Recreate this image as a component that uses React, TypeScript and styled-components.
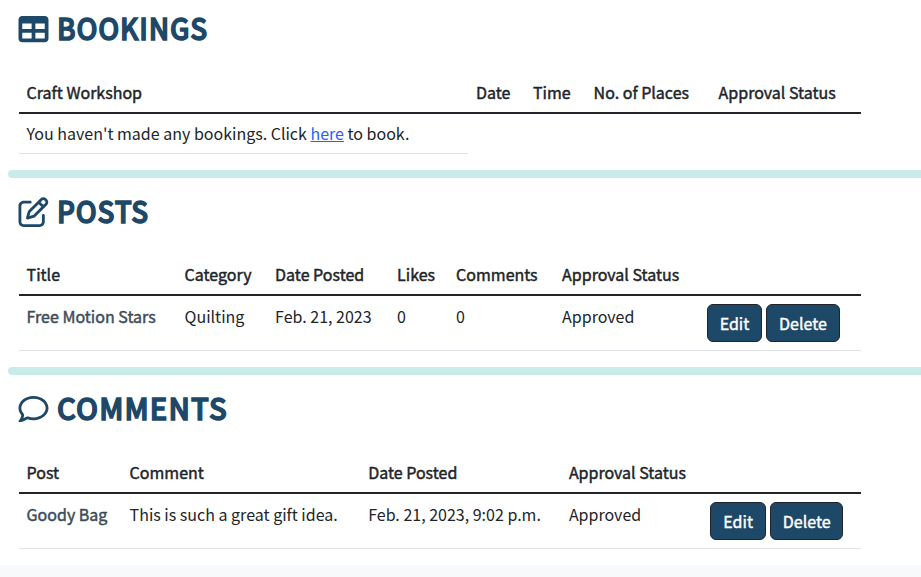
import React from 'react';
import styled, { createGlobalStyle } from 'styled-components';
import { FaTable, FaRegPenToSquare, FaRegComment } from 'react-icons/fa6';

const GlobalStyle = createGlobalStyle`
  *, *::before, *::after { box-sizing: border-box; }
  body {
    margin: 0;
    background: #fff;
    color: #212529;
    font: 400 16px/24px "Noto Sans CJK SC", "Noto Sans", sans-serif;
    overflow: hidden;
  }
`;

const Page = styled.main`
  height: 577px;
  overflow: hidden;
`;

const Section = styled.section`
  padding-left: 18.6px;
`;

const Heading = styled.h2<{ $height: number; $top: number }>`
  display: flex;
  align-items: flex-start;
  gap: 7.7px;
  height: ${p => p.$height}px;
  margin: 0 0 0 -0.6px;
  padding-top: ${p => p.$top}px;
  color: #1e4868;
  font-size: 30px;
  line-height: 36px;
  font-weight: 500;

  svg {
    width: 31px;
    height: 30px;
    margin-top: 5px;
    flex: none;
  }
`;

const HeadingText = styled.span<{ $spacing: number; $scale: number }>`
  letter-spacing: ${p => p.$spacing}px;
  transform: scaleX(${p => p.$scale});
  transform-origin: left center;
  -webkit-text-stroke: 1.5px #1e4868;
`;

const Table = styled.div`
  width: 842.4px;
`;

const Row = styled.div<{ $columns: string; $height: number; $head?: boolean }>`
  display: grid;
  grid-template-columns: ${p => p.$columns};
  height: ${p => p.$height}px;
  border-bottom: ${p => (p.$head ? '2px solid #212529' : '1px solid #dee2e6')};
  -webkit-text-stroke: ${p => (p.$head ? '0.45px currentColor' : '0')};
  ${p => p.$head && 'line-height: 22px;'}
`;

const EmptyRow = styled(Row)`
  width: 449.4px;
  line-height: 22px;
`;

const Cell = styled.div`
  padding: 8px 0 0 8px;
  white-space: nowrap;
`;

const Link = styled.a`
  color: #1f62fd;
  text-decoration: underline;
`;

const PostLink = styled.a`
  color: #3f4c58;
  text-decoration: none;
  -webkit-text-stroke: 0.45px currentColor;
`;

const Actions = styled.div`
  display: flex;
  gap: 4px;
  padding: 8px 0 0 8px;
`;

const Button = styled.button<{ $width: number }>`
  width: ${p => p.$width}px;
  height: 38px;
  padding: 0 0 1px;
  border: 1px solid #212529;
  border-radius: 6px;
  background: #1e4868;
  color: #fff;
  font: inherit;
  -webkit-text-stroke: 0.4px #fff;
`;

const Divider = styled.hr`
  height: 8px;
  margin: 16px 0 0 8px;
  border: 0;
  border-radius: 4px 0 0 4px;
  background: #c9ece9;
`;

const Footer = styled.footer`
  height: 12px;
  margin-top: 16px;
  background: #f8f9fa;
`;

const bookingColumns = '449.4px 57px 60.6px 125px 1fr';
const postColumns = '158px 90.5px 122px 59px 106px 144.9px 1fr';
const commentColumns = '103px 238.6px 200.7px 141.3px 1fr';

const RowActions = ({ deleteWidth, editWidth }: { deleteWidth: number; editWidth: number }) => (
  <Actions>
    <Button $width={editWidth}>Edit</Button>
    <Button $width={deleteWidth}>Delete</Button>
  </Actions>
);

export default function App() {
  return (
    <Page>
      <GlobalStyle />
      <Section>
        <Heading $height={73} $top={9}>
          <FaTable />
          <HeadingText $spacing={0.9} $scale={0.927}>BOOKINGS</HeadingText>
        </Heading>
        <Table>
          <Row $head $height={41} $columns={bookingColumns}>
            <Cell>Craft Workshop</Cell>
            <Cell>Date</Cell>
            <Cell>Time</Cell>
            <Cell>No. of Places</Cell>
            <Cell>Approval Status</Cell>
          </Row>
          <EmptyRow $height={40} $columns="1fr">
            <Cell>You haven't made any bookings. Click <Link>here</Link> to book.</Cell>
          </EmptyRow>
        </Table>
      </Section>
      <Divider />
      <Section>
        <Heading $height={77} $top={14}>
          <FaRegPenToSquare />
          <HeadingText $spacing={0.9} $scale={0.925}>POSTS</HeadingText>
        </Heading>
        <Table>
          <Row $head $height={41} $columns={postColumns}>
            <Cell>Title</Cell>
            <Cell>Category</Cell>
            <Cell>Date Posted</Cell>
            <Cell>Likes</Cell>
            <Cell>Comments</Cell>
            <Cell>Approval Status</Cell>
          </Row>
          <Row $height={55} $columns={postColumns}>
            <Cell><PostLink>Free Motion Stars</PostLink></Cell>
            <Cell>Quilting</Cell>
            <Cell>Feb. 21, 2023</Cell>
            <Cell>0</Cell>
            <Cell>0</Cell>
            <Cell>Approved</Cell>
            <RowActions editWidth={55} deleteWidth={74} />
          </Row>
        </Table>
      </Section>
      <Divider />
      <Section>
        <Heading $height={78} $top={14}>
          <FaRegComment />
          <HeadingText $spacing={1.2} $scale={0.972}>COMMENTS</HeadingText>
        </Heading>
        <Table>
          <Row $head $height={41} $columns={commentColumns}>
            <Cell>Post</Cell>
            <Cell>Comment</Cell>
            <Cell>Date Posted</Cell>
            <Cell>Approval Status</Cell>
          </Row>
          <Row $height={55} $columns={commentColumns}>
            <Cell><PostLink>Goody Bag</PostLink></Cell>
            <Cell>This is such a great gift idea.</Cell>
            <Cell>Feb. 21, 2023, 9:02 p.m.</Cell>
            <Cell>Approved</Cell>
            <RowActions editWidth={56} deleteWidth={73} />
          </Row>
        </Table>
      </Section>
      <Footer />
    </Page>
  );
}
